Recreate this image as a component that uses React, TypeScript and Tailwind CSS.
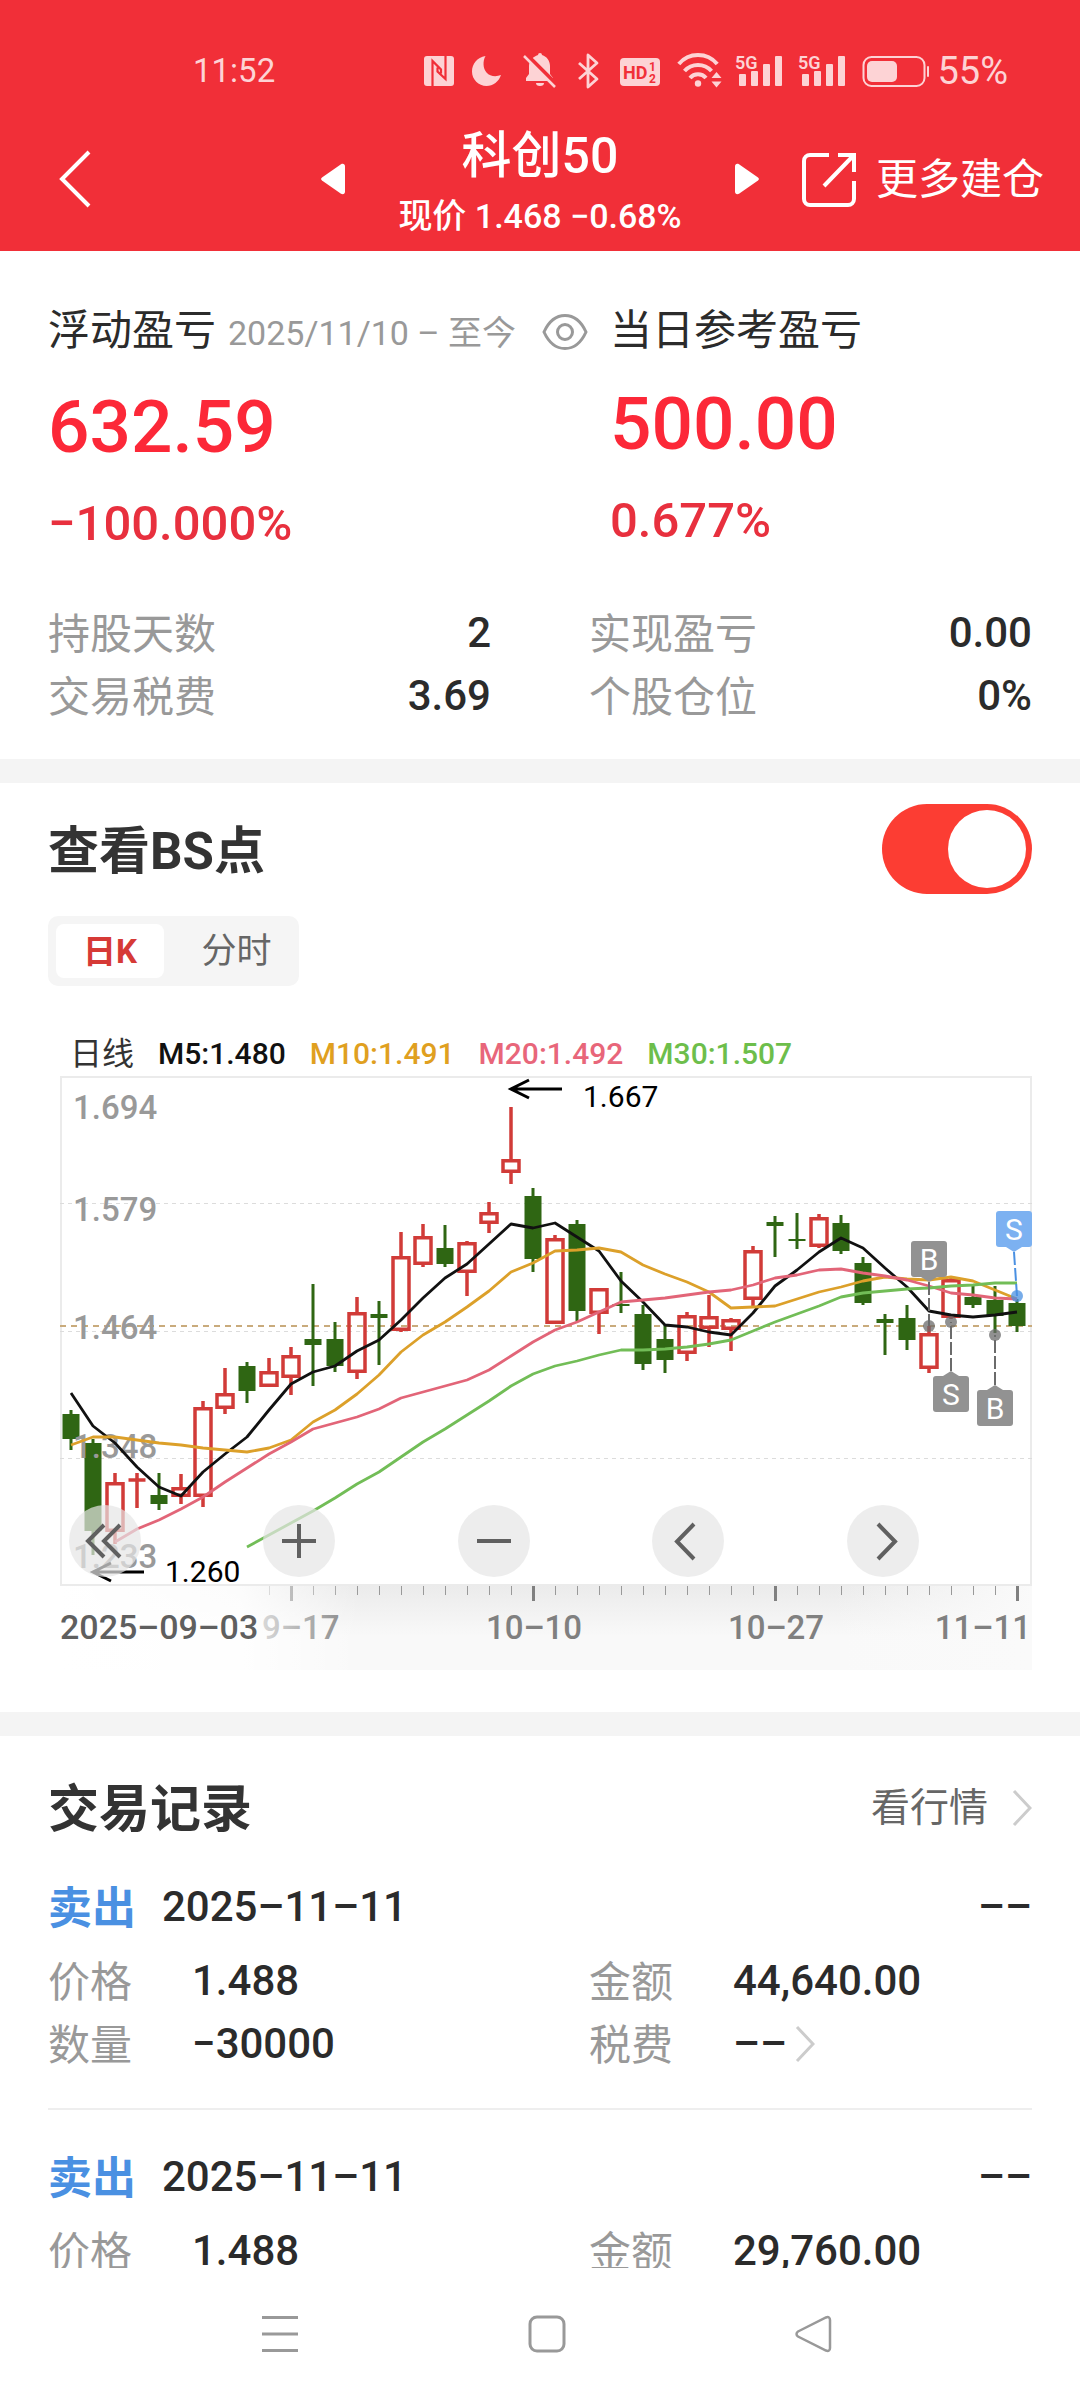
import React, { useState } from 'react';

type CandleKind = 'up' | 'down';

interface Candle {
  kind: CandleKind;
  high: number;
  top: number;
  bottom: number;
  low: number;
}

interface TradeRecord {
  id: number;
  side: string;
  date: string;
  profit: string;
  price: string;
  amount: string;
  quantity?: string;
  fee?: string;
}

const STEP = 22;
const FIRST_X = 11;

const c = (kind: CandleKind, high: number, top: number, bottom: number, low: number): Candle => ({
  kind,
  high,
  top,
  bottom,
  low,
});

const CANDLES: Candle[] = [
  c('down', 334, 338, 363, 374),
  c('down', 363, 367, 455, 479),
  c('up', 397, 406, 456, 468),
  c('up', 397, 402, 406, 432),
  c('down', 397, 419, 428, 434),
  c('up', 398, 411, 421, 428),
  c('up', 325, 331, 421, 431),
  c('up', 292, 317, 333, 338),
  c('down', 286, 290, 315, 327),
  c('up', 282, 295, 311, 311),
  c('up', 271, 279, 302, 319),
  c('down', 208, 263, 269, 310),
  c('down', 246, 263, 290, 296),
  c('up', 221, 236, 297, 303),
  c('down', 225, 238, 242, 289),
  c('up', 156, 180, 255, 256),
  c('up', 148, 160, 189, 191),
  c('down', 149, 172, 188, 191),
  c('up', 165, 166, 197, 220),
  c('up', 126, 136, 148, 157),
  c('up', 31, 83, 97, 108),
  c('down', 112, 120, 183, 196),
  c('up', 159, 162, 248, 248),
  c('down', 144, 148, 235, 245),
  c('up', 212, 212, 238, 258),
  c('down', 196, 228, 230, 237),
  c('down', 229, 238, 288, 294),
  c('down', 248, 263, 284, 297),
  c('up', 236, 239, 278, 285),
  c('up', 219, 240, 253, 271),
  c('up', 242, 243, 254, 275),
  c('up', 170, 174, 224, 230),
  c('down', 140, 146, 150, 181),
  c('down', 137, 163, 165, 173),
  c('up', 138, 141, 171, 172),
  c('down', 139, 147, 175, 178),
  c('down', 181, 187, 227, 229),
  c('down', 238, 243, 247, 279),
  c('down', 229, 242, 264, 274),
  c('up', 250, 257, 293, 297),
  c('up', 200, 203, 242, 243),
  c('down', 208, 221, 229, 232),
  c('down', 210, 224, 240, 257),
  c('down', 223, 227, 250, 256),
];

const AVERAGES = [
  {
    label: 'M5:1.480',
    text: 'text-[#111111]',
    color: '#111111',
    start: 0,
    values: [
      317, 350, 367, 391, 411, 420, 396, 378, 361, 334, 308, 296, 290, 275, 264, 244, 222, 202, 188,
      168, 148, 152, 147, 161, 175, 205, 226, 249, 251, 256, 259, 237, 210, 194, 176, 162, 172, 192,
      211, 235, 239, 241, 239, 236,
    ],
  },
  {
    label: 'M10:1.491',
    text: 'text-[#e0a01f]',
    color: '#dca02a',
    start: 0,
    values: [
      369, 361, 361, 364, 367, 369, 372, 374, 376, 372, 364, 346, 334, 318, 299, 276, 259, 246, 231,
      215, 196, 187, 175, 174, 172, 176, 189, 198, 206, 216, 232, 231, 230, 223, 216, 211, 205, 201,
      203, 204, 201, 205, 214, 223,
    ],
  },
  {
    label: 'M20:1.492',
    text: 'text-[#e8667a]',
    color: '#e26578',
    start: 2,
    values: [
      466, 453, 444, 433, 421, 406, 392, 378, 366, 353, 347, 341, 333, 322, 316, 310, 304, 294, 280,
      266, 254, 246, 236, 226, 224, 222, 219, 216, 214, 209, 202, 199, 194, 193, 197, 200, 204, 210,
      217, 219, 222, 223,
    ],
  },
  {
    label: 'M30:1.507',
    text: 'text-[#6dbe4b]',
    color: '#72bd57',
    start: 8,
    values: [
      471, 459, 447, 435, 422, 408, 396, 381, 366, 353, 339, 325, 310, 298, 290, 285, 279, 274, 274,
      273, 271, 268, 264, 255, 246, 238, 230, 221, 217, 215, 213, 212, 210, 209, 207, 207,
    ],
  },
];

const PRICE_LABELS = [
  { text: '1.694', y: 43 },
  { text: '1.579', y: 145 },
  { text: '1.464', y: 263 },
  { text: '1.348', y: 382 },
  { text: '1.233', y: 492 },
];

const RECORDS: TradeRecord[] = [
  {
    id: 1,
    side: '卖出',
    date: '2025–11–11',
    profit: '––',
    price: '1.488',
    amount: '44,640.00',
    quantity: '−30000',
    fee: '––',
  },
  {
    id: 2,
    side: '卖出',
    date: '2025–11–11',
    profit: '––',
    price: '1.488',
    amount: '29,760.00',
  },
];

const xAt = (i: number) => FIRST_X + i * STEP;

const SignalIcon: React.FC = () => (
  <svg width="45" height="36" viewBox="0 0 45 36" className="overflow-visible" fill="#fdd3d5">
    <text x="-1" y="16" fontSize="18" fontWeight="600">
      5G
    </text>
    <rect x="3" y="21" width="7" height="12" rx="1" />
    <rect x="15" y="18" width="7" height="15" rx="1" />
    <rect x="27" y="11" width="7" height="22" rx="1" />
    <rect x="39" y="3" width="7" height="30" rx="1" />
  </svg>
);

const StatusBar: React.FC = () => (
  <div className="flex h-[46px] items-center justify-between pl-[193px] pr-[72px] text-[#fdd3d5]">
    <span className="text-[33px] leading-[48px]">11:52</span>
    <div className="flex items-center gap-[18px]">
      <svg width="30" height="36" viewBox="0 0 30 36">
        <rect y="3" width="30" height="30" rx="3" fill="#fdd3d5" />
        <path
          d="M8.500 33V8l8.500 8.500v4M21.500 3v23l-8-7.500v-4"
          fill="none"
          stroke="#f12f38"
          strokeWidth="2.200"
        />
      </svg>
      <svg width="30" height="36" viewBox="0 0 30 36" fill="#fdd3d5">
        <path d="M13.500 3C5 4.500 0 11 0 18.500 0 26.500 6.500 33 14.500 33c6.500 0 12.500-4.500 14.500-11-5 2-11 1.500-14.500-2.500C11 15.500 10.500 8.500 13.500 3z" />
      </svg>
      <svg width="40" height="36" viewBox="0 0 40 36" fill="#fdd3d5">
        <path d="M18 2a2 2 0 0 1 4 0c5 1.500 8 6 8 11v8l3 4v3H6v-3l3-4v-8c0-5 4-9.500 9-11zM16 30h8a4 3 0 0 1-8 0z" />
        <path d="M6 1l31 31" stroke="#f12f38" strokeWidth="4" />
        <path d="M4 3l31 31" stroke="#fdd3d5" strokeWidth="2.500" />
      </svg>
      <svg width="22" height="36" viewBox="0 0 22 36" fill="none">
        <path
          d="M1 10l18 16-9 8V2l9 8L1 26"
          stroke="#fdd3d5"
          strokeWidth="2.800"
          strokeLinejoin="round"
        />
      </svg>
      <svg width="42" height="36" viewBox="0 0 42 36">
        <rect x="2" y="5" width="40" height="28" rx="4" fill="#fdd3d5" />
        <g fill="#f12f38" fontWeight="700">
          <text x="5" y="26" fontSize="18">
            HD
          </text>
          <text x="31" y="18" fontSize="12">
            1
          </text>
          <text x="31" y="30" fontSize="12">
            2
          </text>
        </g>
      </svg>
      <svg width="40" height="36" viewBox="0 0 40 36" className="overflow-visible">
        <g fill="none" stroke="#fdd3d5" strokeWidth="4">
          <path d="M.800 11a25 25 0 0 1 38.400 0" />
          <path d="M6.500 18a18 18 0 0 1 27 0" />
          <path d="M12 25a10.500 10.500 0 0 1 16 0" />
        </g>
        <g fill="#fdd3d5">
          <circle cx="20" cy="30.500" r="3.200" />
          <path d="M38.500 19l5 6h-10zM38.500 34.500l5-6h-10z" />
        </g>
      </svg>
      <SignalIcon />
      <SignalIcon />
      <div className="flex items-center gap-2">
        <svg width="67" height="36" viewBox="0 0 67 36">
          <rect x="1.500" y="4" width="61" height="29" rx="8" fill="none" stroke="#fdd3d5" strokeWidth="2" />
          <rect x="5" y="8" width="30" height="21" rx="5" fill="#fdd3d5" />
          <rect x="65" y="13" width="2" height="11" rx="1" fill="#fdd3d5" />
        </svg>
        <span className="text-[38px] leading-[48px]">55%</span>
      </div>
    </div>
  </div>
);

const Header: React.FC = () => (
  <header className="bg-[#f12f38] pt-12 text-white">
    <StatusBar />
    <div className="grid h-[157px] grid-cols-[1fr_auto_1fr] items-center pt-3">
      <button aria-label="返回" className="ml-[58px] flex w-[36px] justify-center">
        <svg width="36" height="58" viewBox="0 0 36 58" fill="none">
          <path d="M31 2L4 29l27 27" stroke="white" strokeWidth="4" />
        </svg>
      </button>
      <div className="flex w-[438px] items-center justify-between">
        <button aria-label="上一只">
          <svg width="24" height="32" viewBox="0 0 24 32" fill="white">
            <path d="M1 14.500L20 1.300C22 .300 24 1 24 3.500v25c0 2.500-2 3.200-4 2.200L1 17.500c-1.200-1-1.200-2 0-3z" />
          </svg>
        </button>
        <div className="pt-3 text-center font-medium">
          <h1 className="text-[50px] leading-[62px]">科创50</h1>
          <p className="text-[34px] leading-[58px]">现价 1.468 −0.68%</p>
        </div>
        <button aria-label="下一只">
          <svg width="24" height="32" viewBox="0 0 24 32" fill="white">
            <path d="M23 14.500L4 1.300C2 .300 0 1 0 3.500v25c0 2.500 2 3.200 4 2.200l19-13.200c1.200-1 1.200-2 0-3z" />
          </svg>
        </button>
      </div>
      <a href="#more" className="flex items-center justify-end gap-5 pr-[36px] pt-0.5 text-[42px]">
        <svg width="54" height="56" viewBox="0 0 54 56" fill="none" stroke="white" strokeWidth="4">
          <path d="M27 3H8a6 6 0 0 0-6 6v38a6 6 0 0 0 6 6h38a6 6 0 0 0 6-6V29" />
          <path d="M36 3h16v17M51 4L22 34" />
        </svg>
        更多建仓
      </a>
    </div>
  </header>
);

const Stat: React.FC<{ label: string; value: string }> = ({ label, value }) => (
  <div className="flex items-start justify-between">
    <dt className="text-[42px] leading-[63px] text-[#999999]">{label}</dt>
    <dd className="text-[42px] font-medium leading-[60px] text-[#2b2b2b]">{value}</dd>
  </div>
);

const ProfitSummary: React.FC = () => (
  <section className="px-12 pb-[30px] pt-[50px]">
    <div className="flex">
      <div className="w-[562px]">
        <div className="flex items-center">
          <div className="flex items-baseline gap-3">
            <h2 className="text-[42px] leading-[60px] text-[#2b2b2b]">浮动盈亏</h2>
            <span className="text-[34px] leading-[60px] text-[#999999]">2025/11/10 – 至今</span>
          </div>
          <button aria-label="显示或隐藏" className="ml-[26px]">
            <svg width="46" height="38" viewBox="0 0 46 38" fill="none" stroke="#999999" strokeWidth="3">
              <path d="M2 19C7 8 14 2.500 23 2.500S39 8 44 19C39 30 32 35.500 23 35.500S7 30 2 19z" />
              <circle cx="23" cy="19" r="7.500" />
            </svg>
          </button>
        </div>
        <p className="mt-[14px] text-[73px] font-medium leading-[100px] text-[#fc2838]">632.59</p>
        <p className="text-[49px] font-medium leading-[94px] text-[#e8303e]">−100.000%</p>
      </div>
      <div>
        <h2 className="text-[42px] leading-[60px] text-[#2b2b2b]">当日参考盈亏</h2>
        <p className="mt-[14px] text-[73px] font-medium leading-[98px] text-[#fc2838]">500.00</p>
        <p className="text-[49px] font-medium leading-[96px] text-[#e8303e]">0.677%</p>
      </div>
    </div>
    <dl className="mt-8 grid grid-cols-2 gap-x-[98px]">
      <Stat label="持股天数" value="2" />
      <Stat label="实现盈亏" value="0.00" />
      <Stat label="交易税费" value="3.69" />
      <Stat label="个股仓位" value="0%" />
    </dl>
  </section>
);

const CandleShape: React.FC<{ candle: Candle; x: number }> = ({ candle, x }) => {
  const { kind, high, top, bottom, low } = candle;
  if (kind === 'down') {
    return (
      <g fill="#2f6613">
        <rect x={x - 1.5} y={high} width="3" height={low - high} />
        <rect x={x - 8.5} y={top} width="17" height={bottom - top} />
      </g>
    );
  }
  return (
    <g fill="none" stroke="#d13b38" strokeWidth="3.5">
      <path d={`M${x} ${high}V${top + 1}M${x} ${bottom - 1}V${low}`} />
      {bottom - top > 4 ? (
        <rect x={x - 8} y={top + 1.75} width="16" height={bottom - top - 3.5} />
      ) : (
        <path d={`M${x - 8.5} ${(top + bottom) / 2}h17`} />
      )}
    </g>
  );
};

interface MarkerProps {
  letter: string;
  x: number;
  boxY: number;
  dotX: number;
  dotY: number;
  box: string;
  line: string;
}

const Marker: React.FC<MarkerProps> = ({ letter, x, boxY, dotX, dotY, box, line }) => {
  const below = boxY > dotY;
  const edge = below ? boxY : boxY + 36;
  const tip = below ? edge - 5 : edge + 5;
  return (
    <g>
      <circle cx={dotX} cy={dotY} r="6" fill={line} opacity="0.75" />
      <path
        d={`M${x} ${tip}L${dotX} ${dotY}`}
        stroke={line}
        strokeWidth="2"
        strokeDasharray="13 3"
      />
      <path d={`M${x - 8} ${edge}h16L${x} ${tip}z`} fill={box} />
      <rect x={x - 18} y={boxY} width="36" height="36" rx="3" fill={box} />
      <text x={x} y={boxY + 29} fontSize="30" textAnchor="middle" fill="white">
        {letter}
      </text>
    </g>
  );
};

const KLineChart: React.FC = () => (
  <svg viewBox="0 0 972 594" className="block h-auto w-full" role="img" aria-label="日K线图">
    <defs>
      <linearGradient id="axisShade" x1="0" y1="0" x2="0" y2="1">
        <stop offset="0" stopColor="#ebebeb" />
        <stop offset="0.600" stopColor="#f9f9f9" />
        <stop offset="1" stopColor="#f9f9f9" />
      </linearGradient>
      <linearGradient id="fadeLeft" x1="0" y1="0" x2="1" y2="0">
        <stop offset="0" stopColor="white" />
        <stop offset="0.600" stopColor="white" stopOpacity="0.850" />
        <stop offset="1" stopColor="white" stopOpacity="0" />
      </linearGradient>
      <linearGradient id="fadeRight" x1="0" y1="0" x2="1" y2="0">
        <stop offset="0" stopColor="#fafafa" stopOpacity="0" />
        <stop offset="1" stopColor="#fafafa" />
      </linearGradient>
    </defs>

    {/* date axis */}
    <rect y="510" width="972" height="84" fill="url(#axisShade)" />
    <rect x="772" y="510" width="200" height="84" fill="url(#fadeRight)" />
    {CANDLES.map((_, i) => {
      if (i < 9) return null;
      const major = i % 11 === 10;
      return (
        <rect
          key={i}
          x={xAt(i) - (major ? 1 : 0)}
          y="510"
          width={major ? 3 : 1}
          height={major ? 15 : 9}
          fill={major ? '#808080' : '#999999'}
        />
      );
    })}
    <g fontSize="33" fontWeight="500" fill="#808080">
      <text x="202" y="563">
        9–17
      </text>
      <text x="474" y="563" textAnchor="middle">
        10–10
      </text>
      <text x="716" y="563" textAnchor="middle">
        10–27
      </text>
      <text x="971" y="563" textAnchor="end">
        11–11
      </text>
    </g>
    <rect y="510" width="300" height="84" fill="url(#fadeLeft)" />
    <text x="0" y="563" fontSize="34" fontWeight="500" fill="#5f5f5f">
      2025–09–03
    </text>

    {/* frame and grid */}
    <rect x="1" y="1" width="970" height="508" fill="none" stroke="#ebebeb" strokeWidth="2" />
    <g stroke="#dcdcdc" strokeWidth="1" strokeDasharray="4 4">
      <path d="M0 127.500H972" />
      <path d="M0 255.500H972" />
      <path d="M0 382.500H972" />
    </g>
    <path d="M0 250H972" stroke="#c9ab7c" strokeWidth="2" strokeDasharray="6 5" />

    {CANDLES.map((candle, i) => (
      <CandleShape key={i} candle={candle} x={xAt(i)} />
    ))}

    <g fontSize="33" fontWeight="500" fill="#999999">
      {PRICE_LABELS.map((label) => (
        <text key={label.text} x="13" y={label.y}>
          {label.text}
        </text>
      ))}
    </g>

    {AVERAGES.map((line) => (
      <polyline
        key={line.label}
        points={line.values.map((y, i) => `${xAt(i + line.start)},${y}`).join(' ')}
        fill="none"
        stroke={line.color}
        strokeWidth="2.800"
        strokeLinejoin="round"
      />
    ))}

    {/* highest and lowest price */}
    <g fill="none" stroke="black" strokeWidth="3">
      <path d="M502 13H452M469 4L451 13l18 9" />
      <path d="M84 496H34M51 487l-18 9 18 9" />
    </g>
    <g fontSize="30" fill="black">
      <text x="523" y="31">
        1.667
      </text>
      <text x="105" y="506">
        1.260
      </text>
    </g>

    <Marker letter="B" x={869} boxY={165} dotX={869} dotY={250} box="#929292" line="#6b6b6b" />
    <Marker letter="S" x={891} boxY={300} dotX={891} dotY={246} box="#929292" line="#6b6b6b" />
    <Marker letter="B" x={935} boxY={314} dotX={935} dotY={259} box="#929292" line="#6b6b6b" />
    <Marker letter="S" x={954} boxY={135} dotX={957} dotY={220} box="#7cb1f1" line="#4a90e2" />
  </svg>
);

const CONTROLS = [
  { name: '最早', path: 'M35 20L19 36l16 16M51 20L35 36l16 16' },
  { name: '放大', path: 'M36 19v34M19 36h34' },
  { name: '缩小', path: 'M19 36h34' },
  { name: '向左', path: 'M42 19L25 36.500 42 54' },
  { name: '向右', path: 'M31 19l17 17.500L31 54' },
];

const ChartSection: React.FC = () => {
  const [showPoints, setShowPoints] = useState(true);
  const [tab, setTab] = useState('日K');

  return (
    <section className="px-12 pb-[42px] pt-5">
      <div className="flex h-[91px] items-center justify-between">
        <h2 className="pt-1.5 text-[51px] font-bold leading-[80px] text-[#333333]">查看BS点</h2>
        <label className="relative block h-[90px] w-[150px]">
          <input
            type="checkbox"
            aria-label="查看BS点"
            checked={showPoints}
            onChange={(e) => setShowPoints(e.target.checked)}
            className="peer absolute inset-0 appearance-none rounded-full bg-gray-300 checked:bg-[#fc3d33]"
          />
          <span className="pointer-events-none absolute left-[6px] top-[6px] size-[78px] rounded-full bg-white peer-checked:left-[66px]" />
        </label>
      </div>

      <div className="mt-[22px] flex w-[251px] gap-[18px] rounded-[10px] bg-[#f5f5f5] p-2">
        {['日K', '分时'].map((name) => (
          <button
            key={name}
            onClick={() => setTab(name)}
            className={
              tab === name
                ? 'h-[54px] w-[108px] rounded-lg bg-white pt-0.5 text-[33px] font-bold text-[#d63a36]'
                : 'h-[54px] flex-1 pt-0.5 text-[35px] text-[#666666]'
            }
          >
            {name}
          </button>
        ))}
      </div>

      <div className="mt-[46px] flex items-center gap-6 pl-[22px] text-[30px] font-medium leading-[44px]">
        <span className="text-[32px] font-normal text-[#333333]">日线</span>
        {AVERAGES.map((line) => (
          <span key={line.label} className={line.text}>
            {line.label}
          </span>
        ))}
      </div>

      <div className="relative ml-3">
        <KLineChart />
        <div className="absolute inset-x-0 top-[429px] grid grid-cols-5">
          {CONTROLS.map((control) => (
            <button
              key={control.name}
              aria-label={control.name}
              className="ml-[9px] size-[72px] rounded-full bg-[#e6e6e6]/70"
            >
              <svg viewBox="0 0 72 72" fill="none" stroke="#606060" strokeWidth="4">
                <path d={control.path} />
              </svg>
            </button>
          ))}
        </div>
      </div>
    </section>
  );
};

const Chevron: React.FC = () => (
  <svg width="20" height="38" viewBox="0 0 20 38" fill="none" stroke="#cccccc" strokeWidth="3">
    <path d="M2 2l16 17L2 36" />
  </svg>
);

const Field: React.FC<{ label: string; value: string; link?: boolean }> = ({
  label,
  value,
  link,
}) => (
  <div className="flex items-start text-[42px]">
    <dt className="w-[144px] leading-[63px] text-[#999999]">{label}</dt>
    <dd className="flex items-center gap-2 font-medium leading-[60px] text-[#2b2b2b]">
      {value}
      {link && <Chevron />}
    </dd>
  </div>
);

const TradeItem: React.FC<{ record: TradeRecord }> = ({ record }) => (
  <li className="border-b-2 border-[#eeeeee] pb-[31px] pt-[34px] first:pt-0 last:border-b-0">
    <div className="flex items-start text-[42px] font-medium leading-[66px] text-[#2b2b2b]">
      <span className="mr-[26px] text-[44px] font-bold leading-[70px] text-[#4a90e2]">
        {record.side}
      </span>
      <span className="flex-1">{record.date}</span>
      <span>{record.profit}</span>
    </div>
    <dl className="mt-[7px] grid grid-cols-2 gap-x-[98px]">
      <Field label="价格" value={record.price} />
      <Field label="金额" value={record.amount} />
      {record.quantity && <Field label="数量" value={record.quantity} />}
      {record.fee && <Field label="税费" value={record.fee} link />}
    </dl>
  </li>
);

const TradeRecords: React.FC = () => (
  <section className="px-12 pt-9">
    <div className="flex items-start justify-between">
      <h2 className="text-[51px] font-bold leading-[76px] text-[#333333]">交易记录</h2>
      <a href="#quote" className="flex items-center gap-6 text-[39px] leading-[72px] text-[#666666]">
        看行情
        <Chevron />
      </a>
    </div>
    <ul className="mt-[26px]">
      {RECORDS.map((record) => (
        <TradeItem key={record.id} record={record} />
      ))}
    </ul>
  </section>
);

const NavBar: React.FC = () => (
  <nav className="flex h-[132px] shrink-0 items-center justify-center gap-[229px] bg-white pl-[14px] text-[#999999]">
    <button aria-label="最近任务">
      <svg width="38" height="38" viewBox="0 0 38 38" fill="none" stroke="currentColor" strokeWidth="3">
        <path d="M1 2.500h36M1 19h36M1 35.500h36" />
      </svg>
    </button>
    <button aria-label="主屏幕">
      <svg width="38" height="38" viewBox="0 0 38 38" fill="none" stroke="currentColor" strokeWidth="3">
        <rect x="2" y="2" width="34" height="34" rx="7" />
      </svg>
    </button>
    <button aria-label="返回上一页">
      <svg width="38" height="38" viewBox="0 0 38 38" fill="none" stroke="currentColor" strokeWidth="2.500">
        <path d="M3 16.500L31 2.500c2.500-1 4 0 4 2.500v28c0 2.500-1.500 3.500-4 2.500L3 21.500c-2-1.500-2-3.500 0-5z" />
      </svg>
    </button>
  </nav>
);

export default function App() {
  return (
    <div className="flex h-screen flex-col bg-white font-[Roboto,'Noto_Sans_CJK_SC',sans-serif]">
      <Header />
      <main className="min-h-0 flex-1 overflow-y-auto [scrollbar-width:none]">
        <ProfitSummary />
        <div className="h-6 bg-[#f4f4f4]" />
        <ChartSection />
        <div className="h-6 bg-[#f4f4f4]" />
        <TradeRecords />
      </main>
      <NavBar />
    </div>
  );
}
